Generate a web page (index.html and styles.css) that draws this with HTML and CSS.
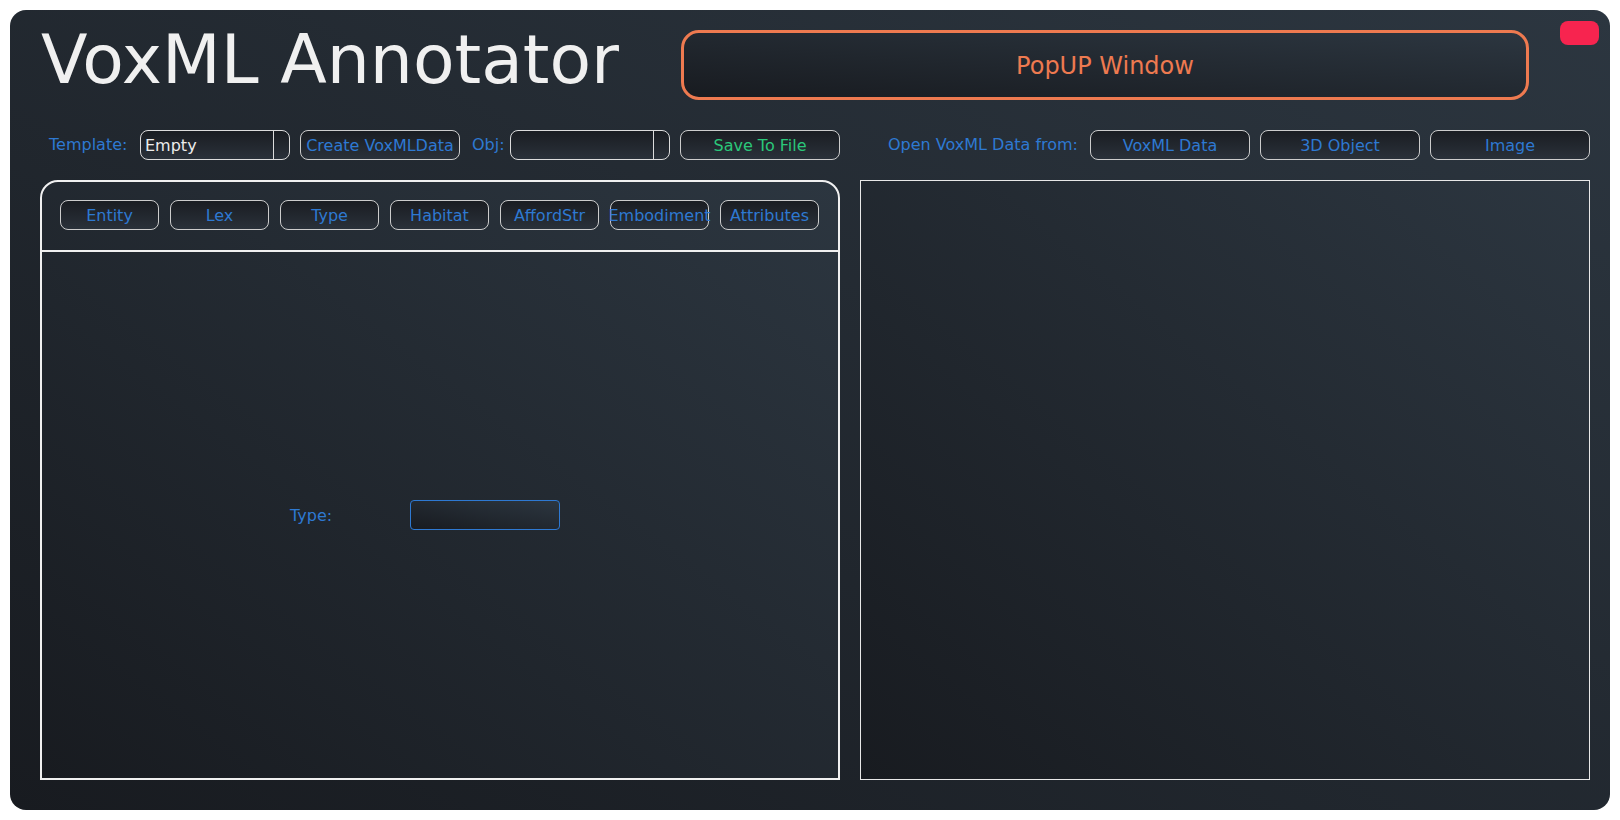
FILE: index.html
```html
<!DOCTYPE html>
<html lang="en">
<head>
<meta charset="utf-8">
<title>VoxML Annotator</title>
<link rel="stylesheet" href="styles.css">
</head>
<body>
<div class="window">
  <header class="top">
    <h1 class="title">VoxML Annotator</h1>
    <button class="popup">PopUP Window</button>
    <button class="close-btn" aria-label="Close"></button>
  </header>

  <div class="toolbar">
    <span class="label lbl-template">Template:</span>
    <div class="combo combo-template"><span class="combo-text">Empty</span><span class="combo-drop"></span></div>
    <button class="btn btn-create">Create VoxMLData</button>
    <span class="label lbl-obj">Obj:</span>
    <div class="combo combo-obj"><span class="combo-text"></span><span class="combo-drop"></span></div>
    <button class="btn btn-save">Save To File</button>
    <span class="label lbl-open">Open VoxML Data from:</span>
    <div class="open-group">
      <button class="btn">VoxML Data</button>
      <button class="btn">3D Object</button>
      <button class="btn">Image</button>
    </div>
  </div>

  <div class="panels">
    <section class="editor">
      <nav class="tabs">
        <button class="tab">Entity</button>
        <button class="tab">Lex</button>
        <button class="tab">Type</button>
        <button class="tab">Habitat</button>
        <button class="tab">AffordStr</button>
        <button class="tab">Embodiment</button>
        <button class="tab">Attributes</button>
      </nav>
      <div class="editor-body">
        <span class="field-label">Type:</span>
        <div class="field-input"></div>
      </div>
    </section>
    <section class="viewer"></section>
  </div>
</div>
</body>
</html>
```

FILE: styles.css
```css
* {
  box-sizing: border-box;
}

html,
body {
  margin: 0;
  padding: 0;
  background: #ffffff;
}

body {
  width: 1620px;
  height: 820px;
  padding: 10px;
  font-family: "DejaVu Sans", "Noto Sans", sans-serif;
  font-size: 16px;
}

button {
  font-family: inherit;
  font-size: 16px;
  padding: 0;
  margin: 0;
  cursor: pointer;
}

.window {
  width: 1600px;
  height: 800px;
  border-radius: 16px;
  background: linear-gradient(to top right, #181b20, #2c3640);
  display: flex;
  flex-direction: column;
  overflow: hidden;
}

/* ---------- header ---------- */
.top {
  display: flex;
  align-items: flex-start;
  height: 120px;
  flex: none;
}

.title {
  margin: 10px 0 0 31px;
  width: 640px;
  font-size: 68px;
  line-height: 79px;
  font-weight: normal;
  color: #f0f0f0;
  white-space: nowrap;
}

.popup {
  margin-top: 20px;
  width: 848px;
  height: 70px;
  padding-top: 2px;
  border: 3px solid #ee7a50;
  border-radius: 18px;
  background: linear-gradient(to top right, #181b20, #2c3640);
  color: #ee7a50;
  font-size: 24px;
}

.close-btn {
  margin: 11px 0 0 31px;
  width: 39px;
  height: 24px;
  border: none;
  border-radius: 8px;
  background: #f7244f;
}

/* ---------- toolbar ---------- */
.toolbar {
  display: flex;
  align-items: center;
  height: 30px;
  flex: none;
  padding-left: 39px;
}

.label {
  color: #2e79d2;
  white-space: nowrap;
  line-height: 30px;
}

.lbl-template {
  width: 91px;
}

.lbl-obj {
  width: 38px;
  margin-left: 12px;
}

.lbl-open {
  width: 202px;
  margin-left: 48px;
}

.combo {
  display: flex;
  height: 30px;
  border: 1px solid #dcdcdc;
  border-radius: 8px;
  background: linear-gradient(to bottom, #1a1d22, #2a313a);
  overflow: hidden;
}

.combo-template {
  width: 150px;
}

.combo-obj {
  width: 160px;
}

.combo-text {
  flex: 1;
  padding-left: 4px;
  color: #ececec;
  line-height: 29px;
}

.combo-drop {
  width: 16px;
  border-left: 1px solid #dcdcdc;
}

.btn {
  width: 160px;
  height: 30px;
  border: 1px solid #cccccc;
  border-radius: 8px;
  background: linear-gradient(to bottom, #1a1d22, #2a313a);
  color: #2e79d2;
  white-space: nowrap;
}

.btn-create {
  margin-left: 10px;
}

.btn-save {
  margin-left: 10px;
  color: #2bc77a;
}

.open-group {
  display: flex;
  gap: 10px;
}

/* ---------- panels ---------- */
.panels {
  display: flex;
  gap: 20px;
  margin-top: 20px;
  height: 600px;
  padding-left: 30px;
  flex: none;
}

.editor {
  width: 800px;
  height: 600px;
  border: 2px solid #f0f0f0;
  border-radius: 18px 18px 0 0;
  background: linear-gradient(to top right, #181b20, #2c3640);
  display: flex;
  flex-direction: column;
}

.tabs {
  height: 70px;
  flex: none;
  display: flex;
  gap: 11px;
  padding: 18px 0 0 18px;
  border-bottom: 2px solid #f0f0f0;
}

.tab {
  width: 99px;
  height: 30px;
  border: 1px solid #cccccc;
  border-radius: 8px;
  background: linear-gradient(to bottom, #1a1d22, #2a313a);
  color: #2e79d2;
  white-space: nowrap;
  display: flex;
  align-items: center;
  justify-content: center;
}

.editor-body {
  flex: 1;
  display: flex;
  align-items: center;
  padding-left: 248px;
}

.field-label {
  width: 120px;
  color: #2e79d2;
}

.field-input {
  width: 150px;
  height: 30px;
  border: 1px solid #2e79d2;
  border-radius: 4px;
  background: linear-gradient(to top right, #181b20, #2c3640);
}

.viewer {
  width: 730px;
  height: 600px;
  border: 1px solid #e8e8e8;
  background: linear-gradient(to top right, #181b20, #2c3640);
}
```
